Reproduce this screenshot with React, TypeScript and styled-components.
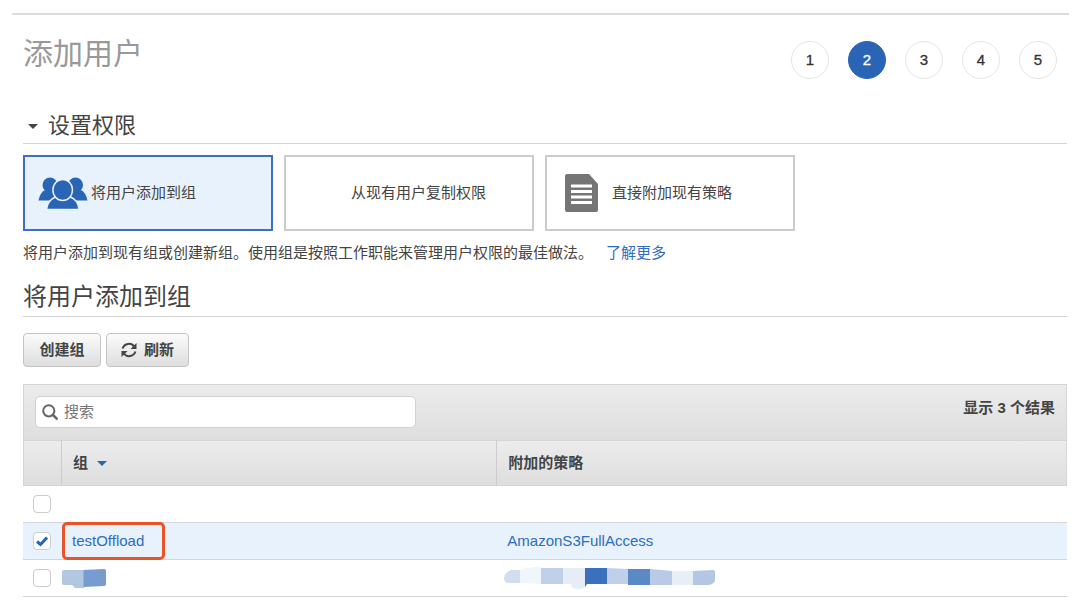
import React, { useState } from 'react';
import styled, { createGlobalStyle } from 'styled-components';

const blue = '#2a65b5';
const ink = '#444444';
const rule = '#d5d5d5';
const tint = '#e7f2fc';
const shade = 'linear-gradient(#ececec, #dedede)';

const GlobalStyle = createGlobalStyle`
  * { box-sizing: border-box; }
  body {
    margin: 0;
    background: #ffffff;
    color: ${ink};
    font: 15px/22px "Liberation Sans", "Noto Sans CJK SC", sans-serif;
  }
  button, input { font: inherit; color: inherit; }
`;

const Page = styled.main`
  margin: 13px 11px 0 12px;
  padding: 0 2px 0 11px;
  border-top: 2px solid #dcdcdc;
`;

const Header = styled.header`
  display: flex;
  justify-content: space-between;
  align-items: flex-start;
  padding: 16px 10px 0 0;
`;

const Title = styled.h1`
  margin: 0;
  font-size: 30px;
  line-height: 46px;
  font-weight: 400;
  color: #999999;
`;

const Steps = styled.ol`
  display: flex;
  gap: 19px;
  margin: 0;
  padding: 10px 0 0;
  list-style: none;
`;

const Step = styled.li<{ $current: boolean }>`
  display: flex;
  align-items: center;
  justify-content: center;
  width: 38px;
  height: 38px;
  border: 1px solid ${p => (p.$current ? blue : '#e4e4e4')};
  border-radius: 50%;
  background: ${p => (p.$current ? blue : '#ffffff')};
  color: ${p => (p.$current ? '#ffffff' : '#333333')};
  -webkit-text-stroke: 0.3px;
`;

const Section = styled.h2`
  margin: 30px 0 11px;
  border-bottom: 1px solid ${rule};
  font-size: 22px;
  line-height: 34px;
  font-weight: 400;
`;

const Toggle = styled.button`
  display: flex;
  align-items: center;
  gap: 10px;
  padding: 0 0 0 5px;
  border: 0;
  background: none;
  line-height: 34px;
`;

const Caret = styled.span<{ $color: string }>`
  display: inline-block;
  border: 5px solid transparent;
  border-top-color: ${p => p.$color};
  border-bottom: 0;
`;

const Options = styled.div`
  display: flex;
  gap: 11px;
`;

const Option = styled.button<{ $selected: boolean; $gap: number }>`
  display: flex;
  align-items: center;
  gap: ${p => p.$gap}px;
  width: 250px;
  height: 76px;
  padding: 0 13px;
  border: 2px solid ${p => (p.$selected ? '#3a70bf' : '#cccccc')};
  background: ${p => (p.$selected ? tint : '#ffffff')};
  text-align: left;
`;

const IconSlot = styled.span<{ $width: number }>`
  display: flex;
  justify-content: center;
  width: ${p => p.$width}px;
`;

const Hint = styled.p`
  margin: 11px 0 14px;
`;

const Link = styled.a`
  color: #2f6dc0;
  text-decoration: none;
`;

const MoreLink = styled(Link)`
  margin-left: 13px;
`;

const GroupHeading = styled.h2`
  margin: 0 0 16px;
  border-bottom: 1px solid ${rule};
  font-size: 24px;
  line-height: 38px;
  font-weight: 400;
`;

const Actions = styled.div`
  display: flex;
  gap: 5px;
  margin-bottom: 17px;
`;

const Action = styled.button`
  display: flex;
  align-items: center;
  justify-content: center;
  gap: 7px;
  min-width: 78px;
  height: 34px;
  padding: 0 14px;
  border: 1px solid #c4c4c4;
  border-radius: 4px;
  background: linear-gradient(#fbfbfb, #dedede);
  font-weight: 700;
`;

const Toolbar = styled.div`
  display: flex;
  justify-content: space-between;
  align-items: flex-start;
  height: 56px;
  padding: 11px;
  border: 1px solid ${rule};
  border-bottom: 0;
  background: ${shade};
`;

const SearchBox = styled.label`
  display: flex;
  align-items: center;
  gap: 6px;
  width: 381px;
  height: 32px;
  padding: 0 6px;
  border: 1px solid #d0d0d0;
  border-radius: 5px;
  background: #ffffff;
  color: #555555;
`;

const SearchInput = styled.input`
  flex: 1;
  min-width: 0;
  padding: 0;
  border: 0;
  outline: 0;
  background: none;
  &::placeholder { color: #777777; opacity: 1; }
`;

const Count = styled.strong`
  line-height: 24px;
`;

const Table = styled.table`
  width: 100%;
  table-layout: fixed;
  border-collapse: separate;
  border-spacing: 0;
`;

const CheckCol = styled.col`
  width: 39px;
`;

const GroupCol = styled.col`
  width: 41.7%;
`;

const HeadCell = styled.th`
  height: 46px;
  padding: 0 11px;
  border: 1px solid ${rule};
  border-left-width: 0;
  background: ${shade};
  text-align: left;
  &:first-child { border-left-width: 1px; }
  &:not(:last-child) { border-right-color: #cccccc; }
`;

const SortCaret = styled(Caret)`
  margin-left: 9px;
  vertical-align: 2px;
`;

const Row = styled.tr<{ $selected: boolean }>`
  background: ${p => (p.$selected ? tint : '#ffffff')};
`;

const Cell = styled.td`
  position: relative;
  height: 37px;
  padding: 0 10px;
  border-bottom: 1px solid ${rule};
`;

const MaskCell = styled(Cell)`
  padding: 0;
`;

const CheckLabel = styled.label`
  display: block;
  position: relative;
  width: 18px;
  height: 18px;
`;

const CheckBox = styled.input`
  appearance: none;
  display: block;
  width: 18px;
  height: 18px;
  margin: 0;
  border: 1px solid #cccccc;
  border-radius: 4px;
  background: #ffffff;
`;

const Tick = styled.svg`
  position: absolute;
  left: 3px;
  top: 3px;
  pointer-events: none;
`;

const Highlight = styled.span`
  position: absolute;
  left: 0;
  top: -1px;
  width: 103px;
  height: 38px;
  border: 3px solid #ea5228;
  border-radius: 5px;
  pointer-events: none;
`;

const Mask = styled.svg`
  display: block;
`;

const UsersIcon = () => (
  <svg width="50" height="32" viewBox="0 0 50 32" aria-hidden="true">
    <g fill={blue}>
      <circle cx="12" cy="8" r="7.500" />
      <circle cx="37.500" cy="8" r="7.500" />
      <path d="M.5 23.500C1.500 18 4 14.500 7 13l11 3-3 7.500z" />
      <path d="M49.500 23.500C48.500 18 46 14.500 43 13l-11 3 3 7.500z" />
    </g>
    <g fill={blue} stroke={tint} strokeWidth="1.500">
      <path d="M8.500 32.500c.8-7 4-10.500 9-12.500h15c5 2 8 5.500 8.500 12.500z" />
      <ellipse cx="24.700" cy="13" rx="9.800" ry="10.500" />
    </g>
  </svg>
);

const DocumentIcon = () => (
  <svg width="33" height="38" viewBox="0 0 33 38" aria-hidden="true">
    <path fill="#757575" d="M2 0h22l9 10v26a2 2 0 0 1-2 2H2a2 2 0 0 1-2-2V2a2 2 0 0 1 2-2z" />
    <path stroke="#ffffff" strokeWidth="3" d="M6 12h21M6 17.500h21M6 23h21M6 28.500h21" />
  </svg>
);

const RefreshIcon = () => (
  <svg width="16" height="16" viewBox="0 0 16 16" fill="none" stroke={ink} strokeWidth="2" aria-hidden="true">
    <path d="M1.500 6.500C3.500 1 10.500.5 13 4.500" />
    <path d="M14.500 9.500C12.500 15 5.500 15.500 3 11.500" />
    <path d="M15.500 1v6h-6z" fill={ink} stroke="none" />
    <path d="M.5 15V9h6z" fill={ink} stroke="none" />
  </svg>
);

const SearchIcon = () => (
  <svg width="16" height="16" viewBox="0 0 16 16" fill="none" stroke="#666666" strokeWidth="2" strokeLinecap="round" aria-hidden="true">
    <circle cx="6.800" cy="6.800" r="5.600" />
    <path strokeWidth="2.500" d="M11 11l3.700 3.700" />
  </svg>
);

const GroupMask = () => (
  <Mask width="44" height="19" viewBox="0 0 44 19" aria-hidden="true">
    <path fill="#b3c7e3" d="M2 1h20v18h-9l-3-3H2q-2 0-2-2V3q0-2 2-2z" />
    <path fill="#779ccf" d="M21.500 1L42 0q2 0 2 2v13q0 2-2 2l-20.500 1z" />
  </Mask>
);

const PolicyMask = () => (
  <Mask width="220" height="24" viewBox="0 0 220 24" aria-hidden="true">
    <path fill="#d1deef" d="M14 4h9v13H11q-4 0-4-5t7-8z" />
    <path fill="#f1f6fc" d="M23 3l13-2h9v17l-22-1z" />
    <path fill="#c0d0e8" d="M44 2h22v16H44z" />
    <path fill="#e6edf6" d="M66 2h22v18q-2 4-9 3-5-1-5-5h-8z" />
    <path fill="#3a70bc" d="M88 2h22v16H90l-2 3z" />
    <path fill="#c0d0e8" d="M110 2l21 1v15h-21z" />
    <path fill="#5b89c6" d="M131 3h22v16h-22z" />
    <path fill="#b8cae5" d="M153 3l22 2v14h-22z" />
    <path fill="#e8eef6" d="M175 5h22v14h-22z" />
    <path fill="#b3c7e3" d="M196 5l20-1q2 0 2 2v9q-2 4-8 4h-14z" />
  </Mask>
);

const steps = [1, 2, 3, 4, 5];

const options = [
  { label: '将用户添加到组', icon: <UsersIcon />, slot: 50, gap: 3 },
  { label: '从现有用户复制权限', icon: null, slot: 43, gap: 9 },
  { label: '直接附加现有策略', icon: <DocumentIcon />, slot: 43, gap: 9 },
];

const rows = [
  { id: 'first', name: '', policy: '' },
  { id: 'testOffload', name: 'testOffload', policy: 'AmazonS3FullAccess' },
  { id: 'masked', name: '', policy: '' },
];

export default function App() {
  const [method, setMethod] = useState(0);
  const [picked, setPicked] = useState('testOffload');

  return (
    <>
      <GlobalStyle />
      <Page>
        <Header>
          <Title>添加用户</Title>
          <Steps>
            {steps.map(n => (
              <Step key={n} $current={n === 2} aria-current={n === 2 ? 'step' : undefined}>{n}</Step>
            ))}
          </Steps>
        </Header>

        <Section>
          <Toggle type="button" aria-expanded="true">
            <Caret $color={ink} />
            设置权限
          </Toggle>
        </Section>

        <Options>
          {options.map((o, i) => (
            <Option
              key={o.label}
              type="button"
              aria-pressed={method === i}
              $selected={method === i}
              $gap={o.gap}
              onClick={() => setMethod(i)}
            >
              <IconSlot $width={o.slot}>{o.icon}</IconSlot>
              {o.label}
            </Option>
          ))}
        </Options>
        <Hint>
          将用户添加到现有组或创建新组。使用组是按照工作职能来管理用户权限的最佳做法。
          <MoreLink href="#more">了解更多</MoreLink>
        </Hint>

        <GroupHeading>将用户添加到组</GroupHeading>
        <Actions>
          <Action type="button">创建组</Action>
          <Action type="button"><RefreshIcon />刷新</Action>
        </Actions>

        <Toolbar>
          <SearchBox>
            <SearchIcon />
            <SearchInput type="text" placeholder="搜索" aria-label="搜索" />
          </SearchBox>
          <Count>显示 3 个结果</Count>
        </Toolbar>
        <Table>
          <colgroup>
            <CheckCol />
            <GroupCol />
            <col />
          </colgroup>
          <thead>
            <tr>
              <HeadCell aria-label="选择" />
              <HeadCell>组<SortCaret $color={blue} /></HeadCell>
              <HeadCell>附加的策略</HeadCell>
            </tr>
          </thead>
          <tbody>
            {rows.map(r => (
              <Row key={r.id} $selected={picked === r.id}>
                <Cell>
                  <CheckLabel>
                    <CheckBox
                      type="checkbox"
                      aria-label="选择组"
                      checked={picked === r.id}
                      onChange={() => setPicked(picked === r.id ? '' : r.id)}
                    />
                    {picked === r.id && (
                      <Tick width="12" height="12" viewBox="0 0 12 12" aria-hidden="true">
                        <path d="M1 6.500L4.500 9.500L11 2.500" fill="none" stroke={blue} strokeWidth="3" />
                      </Tick>
                    )}
                  </CheckLabel>
                </Cell>
                {r.id === 'masked' ? (
                  <>
                    <MaskCell><GroupMask /></MaskCell>
                    <MaskCell><PolicyMask /></MaskCell>
                  </>
                ) : (
                  <>
                    <Cell>
                      {r.name && <Link href="#group">{r.name}</Link>}
                      {r.name && <Highlight />}
                    </Cell>
                    <Cell>{r.policy && <Link href="#policy">{r.policy}</Link>}</Cell>
                  </>
                )}
              </Row>
            ))}
          </tbody>
        </Table>
      </Page>
    </>
  );
}
